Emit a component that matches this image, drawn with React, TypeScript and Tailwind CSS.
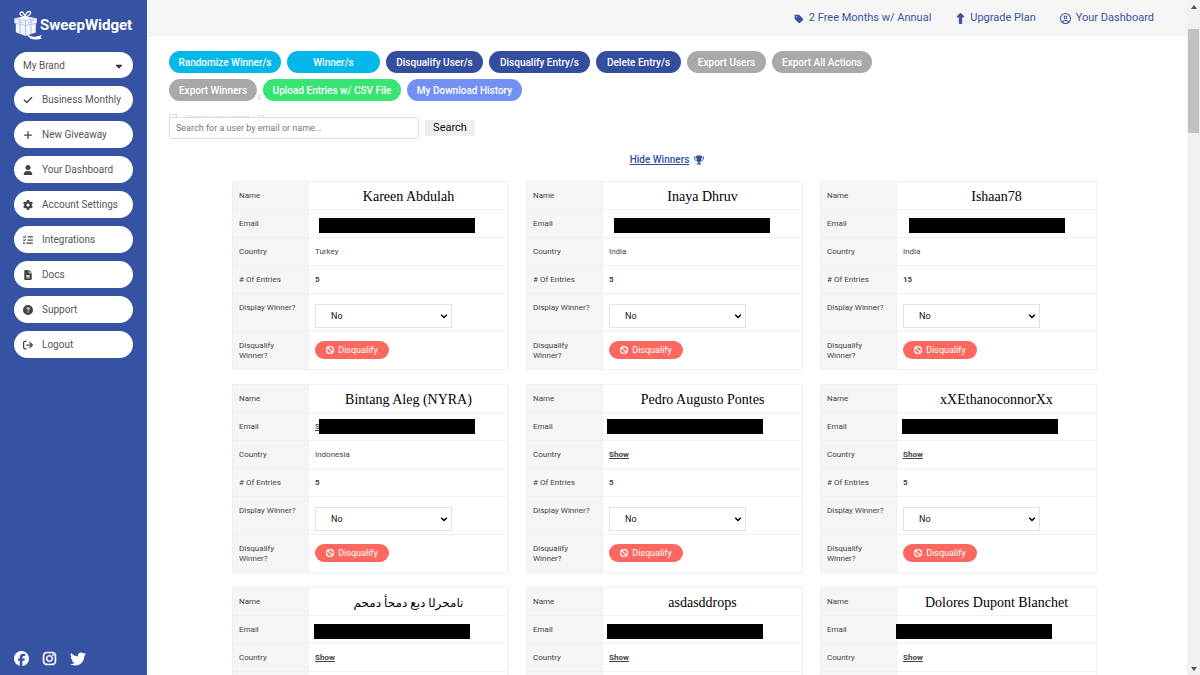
import React from "react";
import {
  FaArrowRightFromBracket,
  FaBan,
  FaCaretDown,
  FaCheck,
  FaCircleQuestion,
  FaFacebook,
  FaFileLines,
  FaGear,
  FaInstagram,
  FaListCheck,
  FaPlus,
  FaRegCircleUser,
  FaTag,
  FaTrophy,
  FaTwitter,
  FaUpLong,
  FaUser,
} from "react-icons/fa6";

type Winner = {
  name: string;
  bar: string;
  country?: string;
  entries: number;
  peek?: boolean;
  nameSize?: string;
};

const navItems = [
  { label: "Business Monthly", Icon: FaCheck },
  { label: "New Giveaway", Icon: FaPlus },
  { label: "Your Dashboard", Icon: FaUser },
  { label: "Account Settings", Icon: FaGear },
  { label: "Integrations", Icon: FaListCheck },
  { label: "Docs", Icon: FaFileLines },
  { label: "Support", Icon: FaCircleQuestion },
  { label: "Logout", Icon: FaArrowRightFromBracket },
];

const actions = [
  { label: "Randomize Winner/s", style: "w-28 bg-[#04b7e9]" },
  { label: "Winner/s", style: "w-[93px] bg-[#04b7e9]" },
  { label: "Disqualify User/s", style: "w-[97px] bg-[#344e9f]" },
  { label: "Disqualify Entry/s", style: "w-[101px] bg-[#344e9f]" },
  { label: "Delete Entry/s", style: "w-[85px] bg-[#344e9f]" },
  { label: "Export Users", style: "w-[79px] bg-[#a9a9a9]" },
  { label: "Export All Actions", style: "w-[100px] bg-[#a9a9a9]" },
];

const moreActions = [
  { label: "Export Winners", style: "w-[88px] bg-[#a9a9a9]" },
  { label: "Upload Entries w/ CSV File", style: "w-[138px] bg-[#38e472]" },
  { label: "My Download History", style: "w-[115px] bg-[#7391f5]" },
];

const winners: Winner[] = [
  { name: "Kareen Abdulah", bar: "left-[10px] top-2", country: "Turkey", entries: 5 },
  { name: "Inaya Dhruv", bar: "left-[11px] top-2", country: "India", entries: 5 },
  { name: "Ishaan78", bar: "left-3 top-2", country: "India", entries: 15 },
  { name: "Bintang Aleg (NYRA)", bar: "left-[10px] top-[6px]", country: "Indonesia", entries: 5, peek: true },
  { name: "Pedro Augusto Pontes", bar: "left-1 top-[6px]", entries: 5 },
  { name: "xXEthanoconnorXx", bar: "left-[5px] top-[6px]", entries: 5 },
  { name: "نامحرل\u200dا دبع دمحأ دمحم", bar: "left-[5px] top-2", entries: 5, nameSize: "text-xs" },
  { name: "asdasddrops", bar: "left-1 top-2", entries: 5 },
  { name: "Dolores Dupont Blanchet", bar: "-left-px top-2", entries: 5 },
];

function GiftLogo() {
  return (
    <svg viewBox="0 0 30 30" className="h-[30px] w-[30px]" aria-hidden="true">
      <g fill="none" stroke="#fff" strokeWidth="1.3" strokeLinejoin="round" strokeLinecap="round">
        <path d="M11 7C7 6.500 5 4 6.500 2.400C8.500 .8 10.500 4 11 7Z" />
        <path d="M11 7C11.500 3.500 14 .5 16.200 1.800C17.800 3.500 14.500 6.500 11 7Z" />
      </g>
      <path d="M.4 8.300L11 6.200L22.800 8.300V13L21.800 13.400V22.500L11.500 26L1.800 22.200V13.400L.4 13Z" fill="#f4f6fd" />
      <path d="M.4 8.300L11.500 10.600L22.800 8.300M11.500 10.600V26M.4 13L11.500 15.500L22.800 13" fill="none" stroke="#9fb0de" strokeWidth=".7" />
      <path d="M6 9.500V24M17 9.500V24M4 11L9 13M14 13L20 10" fill="none" stroke="#bac7eb" strokeWidth="1.200" />
      <path d="M14.500 24C15.500 27 20 28 28 25L26.300 27.300L28 28.800C21.500 30.500 15 29.500 13.500 25Z" fill="#fff" />
    </svg>
  );
}

function Sidebar() {
  return (
    <aside className="flex w-[147px] shrink-0 flex-col bg-[#3652a3] px-[14px] pt-[10px]">
      <a href="#home" className="flex h-[30px] items-center text-white">
        <GiftLogo />
        <span className="-ml-1 text-[15px] font-bold leading-none">SweepWidget</span>
      </a>
      <div className="relative mt-3">
        <select
          aria-label="Brand"
          className="block h-[26px] w-full appearance-none rounded-full bg-white pl-[9px] text-[10px] text-[#555]"
        >
          <option>My Brand</option>
        </select>
        <FaCaretDown className="pointer-events-none absolute right-[9px] top-[9px] size-[10px] text-[#333]" />
      </div>
      <nav className="mt-2 flex flex-col gap-2">
        {navItems.map(({ label, Icon }) => (
          <a
            key={label}
            href="#nav"
            className="flex h-[27px] items-center gap-[9px] whitespace-nowrap rounded-full bg-white pl-[9px] text-[10px] text-[#555]"
          >
            <Icon className="size-[10px] shrink-0 text-[#444]" />
            {label}
          </a>
        ))}
      </nav>
      <div className="mb-2 mt-auto flex gap-[13px] text-white">
        <a href="#facebook" aria-label="Facebook"><FaFacebook className="size-[15px]" /></a>
        <a href="#instagram" aria-label="Instagram"><FaInstagram className="size-[15px]" stroke="currentColor" strokeWidth="16" /></a>
        <a href="#twitter" aria-label="Twitter"><FaTwitter className="size-4" /></a>
      </div>
    </aside>
  );
}

function Pill({ label, style }: { label: string; style: string }) {
  return (
    <button className={`h-[22px] whitespace-nowrap rounded-full text-[10px] font-medium text-white ${style}`}>
      {label}
    </button>
  );
}

function Toolbar() {
  return (
    <div className="px-[22px] pt-[14px]">
      <div className="flex gap-[6px]">
        {actions.map((a) => <Pill key={a.label} {...a} />)}
      </div>
      <div className="relative mt-[6px] flex gap-[6px]">
        <span className="absolute left-[88px] top-3 text-[9px] leading-3 text-[#d0d0d0]">s</span>
        {moreActions.map((a) => <Pill key={a.label} {...a} />)}
      </div>
      <div className="relative mt-4 flex items-center gap-[6px]">
        <div
          aria-hidden="true"
          className="absolute -top-[3px] left-0 flex items-start gap-2 text-[8px] leading-[8px] text-[#d4d4d4]"
        >
          <span className="size-2 border border-[#dcdcdc]" />
          <span>Display user email / IP</span>
        </div>
        <input
          type="search"
          aria-label="Search for a user"
          placeholder="Search for a user by email or name..."
          className="relative h-[22px] w-[250px] rounded-[3px] border border-[#dedede] bg-white px-[6px] text-[9px] placeholder:text-[#777]"
        />
        <button className="h-4 w-[50px] bg-[#efefef] text-[11px] leading-4 text-[#111]">Search</button>
      </div>
    </div>
  );
}

function Row({ label, height, children }: { label: string; height: string; children: React.ReactNode }) {
  return (
    <tr className={height}>
      <th
        scope="row"
        className="w-[76px] border border-[#f0f0f0] bg-[#f5f5f5] px-[6px] pt-[9px] text-left align-top font-normal leading-[10px]"
      >
        {label}
      </th>
      <td className="relative border border-[#f0f0f0] px-[6px] py-0">{children}</td>
    </tr>
  );
}

function WinnerCard({ winner }: { winner: Winner }) {
  return (
    <table className="w-full table-fixed border-collapse text-[8px] leading-[10px] text-[#444]">
      <tbody>
        <Row label="Name" height="h-7">
          <div
            className={`pt-[3px] text-center font-['Liberation_Serif','DejaVu_Sans',serif] leading-4 text-black ${winner.nameSize ?? "text-sm leading-4"}`}
          >
            {winner.name}
          </div>
        </Row>
        <Row label="Email" height="h-7">
          {winner.peek && <a href="#email" className="font-medium underline">S</a>}
          <span className={`absolute h-[15px] w-[156px] bg-black ${winner.bar}`} />
        </Row>
        <Row label="Country" height="h-7">
          {winner.country ?? <a href="#country" className="font-bold underline">Show</a>}
        </Row>
        <Row label="# Of Entries" height="h-7">
          <span className="font-bold">{winner.entries}</span>
        </Row>
        <Row label="Display Winner?" height="h-[38px]">
          <div className="relative mt-[6px] w-[137px]">
            <select
              aria-label={`Display winner ${winner.name}`}
              className="block h-6 w-full appearance-none border border-[#e2e2e2] bg-white pl-[15px] text-[9px] text-[#111]"
            >
              <option>No</option>
              <option>Yes</option>
            </select>
            <svg viewBox="0 0 8 8" className="pointer-events-none absolute right-1 top-2 size-2" aria-hidden="true">
              <path d="M1.200 2.700L4 5.500L6.800 2.700" fill="none" stroke="#000" strokeWidth="1.500" />
            </svg>
          </div>
        </Row>
        <Row label="Disqualify Winner?" height="h-[38px]">
          <button className="mb-[2px] flex h-[18px] w-[74px] items-center justify-center gap-1 rounded-full bg-[#fc6860] text-[9px] text-white">
            <FaBan className="size-2" stroke="currentColor" strokeWidth="16" />
            Disqualify
          </button>
        </Row>
      </tbody>
    </table>
  );
}

export default function App() {
  return (
    <div className="flex h-screen overflow-hidden bg-white font-['Roboto','Liberation_Sans',sans-serif]">
      <Sidebar />
      <main className="min-w-0 flex-1 overflow-hidden">
        <header className="flex h-[37px] items-center justify-end gap-6 bg-[#f5f5f5] pr-[33px] text-[11px] text-[#3a539c]">
          <a href="#annual" className="flex items-center gap-[5px]"><FaTag className="size-[10px]" />2 Free Months w/ Annual</a>
          <a href="#upgrade" className="flex items-center gap-1"><FaUpLong className="size-[11px]" stroke="currentColor" strokeWidth="24" />Upgrade Plan</a>
          <a href="#dashboard" className="flex items-center gap-[5px]"><FaRegCircleUser className="size-[11px]" />Your Dashboard</a>
        </header>
        <Toolbar />
        <div className="mt-[15px] flex justify-center">
          <a href="#hide" className="flex items-center gap-[5px] text-[10px] font-medium leading-3 text-[#344e9f]">
            <span className="underline">Hide Winners</span>
            <FaTrophy className="size-[10px]" />
          </a>
        </div>
        <section className="mt-[15px] grid grid-cols-3 gap-x-[17px] gap-y-[14px] pl-[85px] pr-[90px]">
          {winners.map((w) => <WinnerCard key={w.name} winner={w} />)}
        </section>
      </main>
      <div aria-hidden="true" className="flex w-[13px] shrink-0 flex-col items-center bg-[#f1f1f1] py-1 text-[#505050]">
        <svg viewBox="0 0 6 4" className="mt-px h-1 w-[6px]"><path d="M0 4L3 0L6 4Z" fill="currentColor" /></svg>
        <div className="mt-5 h-[104px] w-[11px] bg-[#c1c1c1]" />
        <svg viewBox="0 0 6 4" className="mt-auto h-1 w-[6px]"><path d="M0 0L3 4L6 0Z" fill="currentColor" /></svg>
      </div>
    </div>
  );
}
